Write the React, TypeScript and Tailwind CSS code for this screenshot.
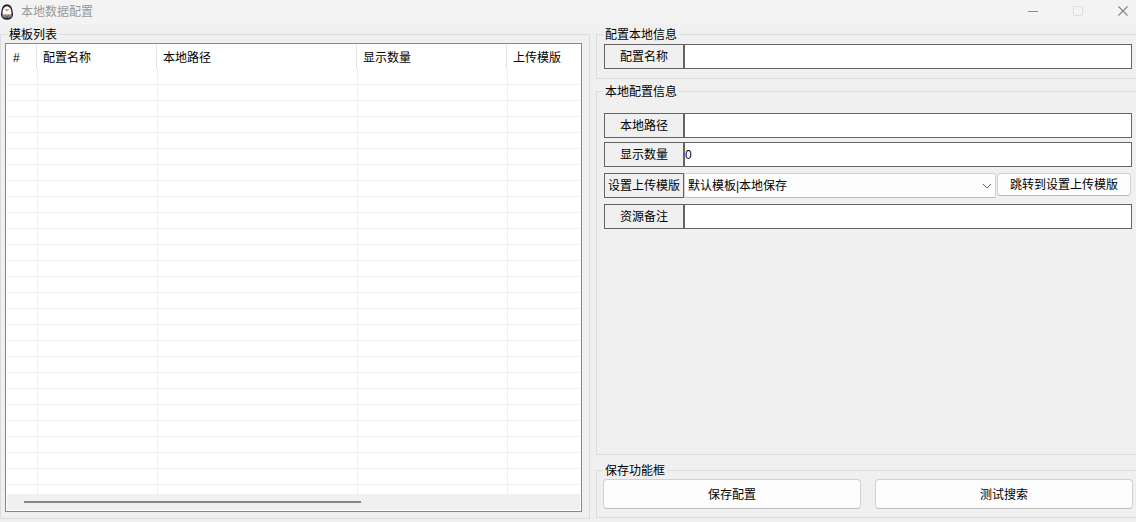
import type { ReactNode } from "react";

const columns = [
  { title: "#", width: "w-[30px]" },
  { title: "配置名称", width: "w-[120px]" },
  { title: "本地路径", width: "w-[200px]" },
  { title: "显示数量", width: "w-[150px]" },
  { title: "上传模版", width: "w-auto" },
];

const emptyRows = Array.from({ length: 27 }, (_, i) => i);

function PenguinIcon() {
  return (
    <svg className="h-4 w-[14px]" viewBox="0 0 14 16" aria-hidden="true">
      <path
        d="M7 0.2C4 0.2 2.2 2.4 1.7 5.6C1.4 7.6 0.8 9.4 1 11.2C1.3 13.8 3.4 15.7 7 15.7C10.6 15.7 12.7 13.8 13 11.2C13.2 9.4 12.600 7.600 12.300 5.600C11.800 2.400 10 0.200 7 0.200Z"
        fill="#2a2030"
      />
      <path
        d="M7 2.200C4.600 2.200 3 4.400 2.700 7.200C2.500 8.800 2.500 9.800 2.700 10.800H11.300C11.500 9.800 11.500 8.800 11.300 7.200C11 4.400 9.400 2.200 7 2.200Z"
        fill="#ffffff"
      />
      <path d="M4.6 5H9.4Q9 6.400 8 6.600V7.300H6V6.600Q5 6.400 4.600 5Z" fill="#fb9a35" />
      <path d="M2 10.800H12V13.200Q7 14.400 2 13.200Z" fill="#6c6672" />
      <path d="M3 11.600H5M6 11.600H8M9 11.600H11M4 13H6M8 13H10" stroke="#aaa5ae" strokeWidth="0.800" />
    </svg>
  );
}

function TitleBar() {
  return (
    <header className="flex h-6 shrink-0 items-center bg-[#f3f3f3] pb-px text-[#999999]">
      <PenguinIcon />
      <h1 className="ml-[7px] flex-1 leading-4">本地数据配置</h1>
      <div className="flex items-center gap-[34px] pr-[7px]">
        <button type="button" aria-label="最小化" className="size-[11px]">
          <svg className="size-[11px]" viewBox="0 0 11 11">
            <path d="M0 5.500H10" stroke="#8c8c8c" />
          </svg>
        </button>
        <button type="button" aria-label="最大化" disabled className="size-[11px]">
          <svg className="size-[11px]" viewBox="0 0 11 11">
            <rect x="0.500" y="0.500" width="9" height="9" rx="1" fill="none" stroke="#dedede" />
          </svg>
        </button>
        <button type="button" aria-label="关闭" className="size-[11px]">
          <svg className="size-[11px]" viewBox="0 0 11 11">
            <path d="M0.500 0.500L9.500 9.500M9.500 0.500L0.500 9.500" stroke="#858585" strokeWidth="1.100" />
          </svg>
        </button>
      </div>
    </header>
  );
}

function Group({ title, className, children }: { title: string; className: string; children: ReactNode }) {
  return (
    <fieldset className={`flex min-w-0 flex-col border-[#dcdcdc] ${className}`}>
      <legend className="ml-1.5 px-0.5 pt-0.5 leading-3.5">{title}</legend>
      {children}
    </fieldset>
  );
}

function FieldLabel({ id, children }: { id: string; children: ReactNode }) {
  return (
    <label
      htmlFor={id}
      className="flex h-[25px] w-20 shrink-0 items-center justify-center border border-[#646464] whitespace-nowrap"
    >
      {children}
    </label>
  );
}

function TextField({ id, label, value = "" }: { id: string; label: string; value?: string }) {
  return (
    <div className="flex">
      <FieldLabel id={id}>{label}</FieldLabel>
      <input
        id={id}
        type="text"
        defaultValue={value}
        className="h-[25px] min-w-0 flex-1 border border-[#646464] bg-white outline-none"
      />
    </div>
  );
}

function PushButton({ className, children }: { className: string; children: ReactNode }) {
  return (
    <button
      type="button"
      className={`rounded border border-[#d0d0d0] border-b-[#bababa] bg-[#fdfdfd] whitespace-nowrap ${className}`}
    >
      {children}
    </button>
  );
}

function TemplateList() {
  return (
    <div className="mt-px mr-[7px] mb-1.5 ml-1 flex min-h-0 flex-1 flex-col border border-[#828790] bg-white p-px">
      <div className="min-h-0 flex-1 overflow-hidden">
        <table className="w-full table-fixed border-separate border-spacing-0">
          <thead>
            <tr className="h-6">
              {columns.map((c) => (
                <th
                  key={c.title}
                  scope="col"
                  className={`${c.width} border-r border-[#e5e5e5] p-0 pt-0.5 pl-1.5 text-left font-normal whitespace-nowrap last:border-r-0`}
                >
                  {c.title}
                </th>
              ))}
            </tr>
          </thead>
          <tbody>
            {emptyRows.map((row) => (
              <tr key={row} className="h-4">
                {columns.map((c) => (
                  <td key={c.title} className="border-b border-l border-[#f0f0f0] p-0 first:border-l-0" />
                ))}
              </tr>
            ))}
          </tbody>
        </table>
      </div>
      <div className="flex h-4 shrink-0 items-center bg-[#f0f0f0] px-[17px]">
        <div className="h-0.5 w-[62.5%] bg-[#868686]" />
      </div>
    </div>
  );
}

export default function App() {
  return (
    <div className="flex h-screen flex-col bg-[#f0f0f0] font-['Liberation_Sans','Noto_Sans_CJK_SC',sans-serif] text-xs text-black">
      <TitleBar />
      <main className="grid min-h-0 flex-1 grid-cols-[59fr_54fr] grid-rows-[minmax(0,1fr)] gap-1.5 pt-0.5 pb-[3px]">
        <Group title="模板列表" className="min-h-0 border">
          <TemplateList />
        </Group>

        <div className="flex min-w-0 flex-col pb-px">
          <Group title="配置本地信息" className="border-y border-l">
            <div className="pt-0.5 pr-1 pb-[9px] pl-[7px]">
              <TextField id="config-name" label="配置名称" />
            </div>
          </Group>

          <Group title="本地配置信息" className="mt-1 flex-1 border-y border-l">
            <div className="flex flex-col gap-1.5 pt-3.5 pr-1 pl-[7px]">
              <div className="flex flex-col gap-1">
                <TextField id="local-path" label="本地路径" />
                <TextField id="display-count" label="显示数量" value="0" />
              </div>
              <div className="flex items-start">
                <FieldLabel id="upload-template">设置上传模版</FieldLabel>
                <div className="relative min-w-0 flex-1">
                  <select
                    id="upload-template"
                    className="block h-[25px] w-full appearance-none rounded-xs border border-[#d0d0d0] border-b-[#bababa] bg-[#fdfdfd] pl-[3px] outline-none"
                  >
                    <option>默认模板|本地保存</option>
                  </select>
                  <svg
                    className="pointer-events-none absolute top-2.5 right-1 h-[6px] w-[10px]"
                    viewBox="0 0 10 6"
                    aria-hidden="true"
                  >
                    <path d="M1 1L5 5L9 1" fill="none" stroke="#606060" />
                  </svg>
                </div>
                <PushButton className="mr-px ml-px h-[23px] w-[134px] shrink-0">跳转到设置上传模版</PushButton>
              </div>
              <TextField id="remark" label="资源备注" />
            </div>
          </Group>

          <Group title="保存功能框" className="mt-[7px] border-y border-l">
            <div className="flex gap-3.5 pt-px pr-[3px] pb-2 pl-1.5">
              <PushButton className="h-[30px] flex-1 pt-0.5">保存配置</PushButton>
              <PushButton className="h-[30px] flex-1 pt-0.5">测试搜索</PushButton>
            </div>
          </Group>
        </div>
      </main>
    </div>
  );
}
